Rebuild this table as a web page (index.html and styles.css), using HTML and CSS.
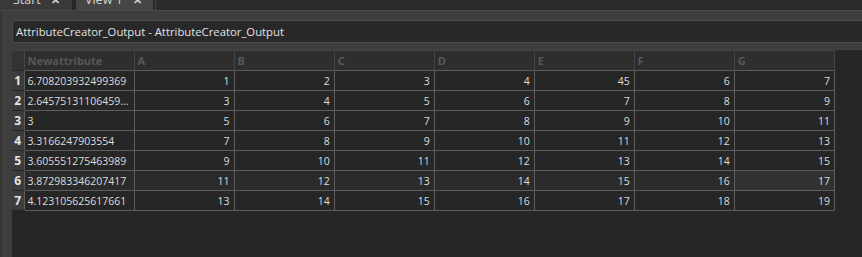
FILE: index.html
```html
<!DOCTYPE html>
<html>
<head>
<meta charset="utf-8">
<link rel="stylesheet" href="styles.css">
</head>
<body>
<div class="tabs">
  <div class="tab">Start <span class="x">✕</span></div>
  <div class="tab active">View 1 <span class="x">✕</span></div>
  <div class="tab-rest"></div>
</div>
<div class="panel">
  <div class="title">AttributeCreator_Output - AttributeCreator_Output</div>
  <div class="view">
    <table class="grid">
      <colgroup>
        <col class="c-rh"><col class="c-first"><col class="c-n"><col class="c-n"><col class="c-n"><col class="c-n"><col class="c-n"><col class="c-n"><col class="c-n">
      </colgroup>
      <thead>
        <tr><th class="corner"></th><th>Newattribute</th><th>A</th><th>B</th><th>C</th><th>D</th><th>E</th><th>F</th><th>G</th></tr>
      </thead>
      <tbody>
        <tr><td class="rh">1</td><td class="txt">6.708203932499369</td><td>1</td><td>2</td><td>3</td><td>4</td><td>45</td><td>6</td><td>7</td></tr>
        <tr><td class="rh">2</td><td class="txt">2.64575131106459...</td><td>3</td><td>4</td><td>5</td><td>6</td><td>7</td><td>8</td><td>9</td></tr>
        <tr><td class="rh">3</td><td class="txt">3</td><td>5</td><td>6</td><td>7</td><td>8</td><td>9</td><td>10</td><td>11</td></tr>
        <tr><td class="rh">4</td><td class="txt">3.3166247903554</td><td>7</td><td>8</td><td>9</td><td>10</td><td>11</td><td>12</td><td>13</td></tr>
        <tr><td class="rh">5</td><td class="txt">3.605551275463989</td><td>9</td><td>10</td><td>11</td><td>12</td><td>13</td><td>14</td><td>15</td></tr>
        <tr class="hover"><td class="rh">6</td><td class="txt">3.872983346207417</td><td>11</td><td>12</td><td>13</td><td>14</td><td>15</td><td>16</td><td class="hot">17</td></tr>
        <tr><td class="rh">7</td><td class="txt">4.123105625617661</td><td>13</td><td>14</td><td>15</td><td>16</td><td>17</td><td>18</td><td>19</td></tr>
      </tbody>
    </table>
  </div>
</div>
</body>
</html>
```

FILE: styles.css
```css
html, body {
  margin: 0;
  padding: 0;
  background: #2b2b2b;
  height: 257px;
  overflow: hidden;
}
body {
  font-family: "Open Sans", "Noto Sans", sans-serif;
  color: #dcdcdc;
}
.tabs {
  display: flex;
  height: 10px;
  overflow: hidden;
  background: #2b2b2b;
}
.tab {
  width: 73px;
  height: 10px;
  box-sizing: border-box;
  background: #3a3a3a;
  border-right: 1px solid #232323;
  font-size: 12.5px;
  line-height: 12px;
  padding-left: 13px;
  padding-bottom: 4px;
  color: #d4d4d4;
  display: flex;
  align-items: flex-end;
  white-space: nowrap;
}
.tab.active {
  margin-left: 2px;
  width: 79px;
  background: #464646;
  border-left: 1px solid #262626;
  padding-left: 9px;
}
.tab .x {
  font-size: 11px;
  font-weight: bold;
  margin-left: 10px;
}
.tab-rest {
  flex: 1;
  border-left: 1px solid #454545;
  margin-left: 1px;
}
.panel {
  background: #3e3e3e;
  border-top: 1px solid #4a4a4a;
  border-left: 2px solid #353535;
  padding: 9px 0 0 10px;
  height: 247px;
  box-sizing: border-box;
  display: flex;
  flex-direction: column;
  overflow: hidden;
}
.title {
  flex: none;
  height: 23px;
  box-sizing: border-box;
  background: #282828;
  border: 1px solid #4c4c4c;
  border-right: none;
  border-radius: 3px 0 0 3px;
  font-size: 11.3px;
  line-height: 21px;
  padding-left: 3px;
  color: #e2e2e2;
  white-space: nowrap;
}
.view {
  margin-top: 7px;
  background: #262626;
  flex: 1;
  min-height: 0;
}
.grid {
  border-collapse: collapse;
  table-layout: fixed;
  width: 823px;
  font-size: 10.5px;
}
.c-rh { width: 12px; }
.c-first { width: 110px; }
.c-n { width: 100px; }
th {
  height: 19px;
  padding: 0 3px;
  text-align: left;
  font-weight: bold;
  color: #585858;
  background: #2e2e2e;
  border-top: 1px solid #454545;
  border-left: 1px solid #454545;
  border-right: 1px solid #454545;
  font-size: 11px;
}
th.corner {
  background: #333333;
  border-left: none;
}
td {
  height: 19px;
  padding: 0 4px 0 3px;
  text-align: right;
  border: 1px solid #5d5d5d;
  white-space: nowrap;
  overflow: hidden;
  color: #dcdcdc;
  line-height: 18px;
}
td.txt {
  text-align: left;
}
td.rh {
  background: #3c3c3c;
  text-align: center;
  padding: 0;
  font-weight: bold;
  font-size: 12px;
  color: #e6e6e6;
  border-left: none;
  border-top: 1px solid #262626;
  border-bottom: 1px solid #262626;
}
tr.hover td:not(.rh) {
  background: #2b2b2b;
}
tr.hover td.hot {
  background: #313131;
}
```
